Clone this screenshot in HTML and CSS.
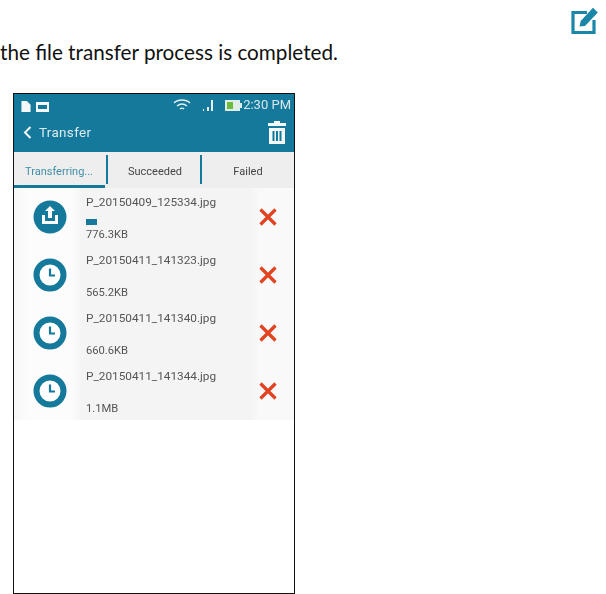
FILE: index.html
```html
<!DOCTYPE html>
<html lang="en">
<head>
<meta charset="UTF-8">
<meta name="viewport" content="width=device-width, initial-scale=1.0">
<title>Transfer</title>
<link rel="stylesheet" href="styles.css">
</head>
<body>
<div class="note-icon">
  <svg width="28" height="28" viewBox="0 0 28 28" fill="none">
    <path d="M16 5.500H2v20h21V13" stroke="#1a87a8" stroke-width="3.2"/>
    <path d="M8.500 19.500l1.200-5.500L22 .8l4.800 4.800L14 19z" fill="#1a87a8"/>
  </svg>
</div>
<p class="note">the file transfer process is completed.</p>

<div class="phone">
  <div class="statusbar">
    <div class="status-left">
      <svg width="10" height="11" viewBox="0 0 10 12"><path d="M0 0h6l4 4v8H0z" fill="#f4f8f9"/></svg>
      <svg width="13" height="10" viewBox="0 0 13 10"><path d="M0 0h13v10H0z" fill="#f4f8f9"/><path d="M2 3h9v4H2z" fill="#14799a"/></svg>
    </div>
    <div class="status-right">
      <svg width="18" height="13" viewBox="0 0 18 13" fill="none" stroke="#e4f0f3" stroke-width="1.4"><path d="M1 4c4-4 12-4 16 0M4 7c3-2.500 7-2.500 10 0M7 10c1-1 3-1 4 0"/></svg>
      <svg class="signal" width="14" height="12" viewBox="0 0 14 12"><path d="M1 10h1v2H1zM5 8h2v4H5zM9 1h2v11H9z" fill="#e4f0f3"/></svg>
      <svg class="battery" width="17" height="11" viewBox="0 0 17 11"><path d="M0 0h15v11H0z" fill="#dfeee8"/><path d="M2 2h6v7H2z" fill="#6cbb3c"/><path d="M15 3h2v5h-2z" fill="#dfeee8"/></svg>
      <span class="clock">2:30 PM</span>
    </div>
  </div>
  <div class="appbar">
    <div class="back">
      <svg width="9" height="13" viewBox="0 0 9 13" fill="none" stroke="#f2f7f8" stroke-width="2"><path d="M7.500 1L2 6.500l5.500 5.500"/></svg>
      <span class="title">Transfer</span>
    </div>
    <svg class="trash" width="18" height="23" viewBox="0 0 18 23">
      <path d="M6 0h6v2h6v3H0V2h6z" fill="#f4f8f9"/>
      <path d="M1 7h16v16H1z" fill="#f4f8f9"/>
      <path d="M4.500 10h2v10h-2zM8 10h2v10H8zM11.500 10h2v10h-2z" fill="#14799a"/>
    </svg>
  </div>
  <div class="tabs">
    <div class="tab active">Transferring...</div>
    <div class="tab">Succeeded</div>
    <div class="tab">Failed</div>
  </div>
  <div class="list">
    <div class="row">
      <div class="badge">
        <svg width="34" height="34" viewBox="0 0 34 34">
          <circle cx="17" cy="17" r="16.500" fill="#14799a"/>
          <path d="M17 6l5 5h-3v7h-4v-7h-3z" fill="#fff"/>
          <path d="M9 15h3v6h10v-6h3v9H9z" fill="#fff"/>
        </svg>
      </div>
      <div class="info">
        <div class="name">P_20150409_125334.jpg</div>
        <div class="progress"></div>
        <div class="size">776.3KB</div>
      </div>
      <div class="remove">
        <svg width="18" height="18" viewBox="0 0 18 18" stroke="#e2421f" stroke-width="3.200"><path d="M1.500 1.500l15 15M16.500 1.500l-15 15"/></svg>
      </div>
    </div>
    <div class="row">
      <div class="badge">
        <svg width="34" height="34" viewBox="0 0 34 34">
          <circle cx="17" cy="17" r="13.500" fill="#fff" stroke="#14799a" stroke-width="6"/>
          <path d="M17 10.500v7h5" fill="none" stroke="#14799a" stroke-width="2.200"/>
        </svg>
      </div>
      <div class="info">
        <div class="name">P_20150411_141323.jpg</div>
        <div class="size">565.2KB</div>
      </div>
      <div class="remove">
        <svg width="18" height="18" viewBox="0 0 18 18" stroke="#e2421f" stroke-width="3.200"><path d="M1.500 1.500l15 15M16.500 1.500l-15 15"/></svg>
      </div>
    </div>
    <div class="row">
      <div class="badge">
        <svg width="34" height="34" viewBox="0 0 34 34">
          <circle cx="17" cy="17" r="13.500" fill="#fff" stroke="#14799a" stroke-width="6"/>
          <path d="M17 10.500v7h5" fill="none" stroke="#14799a" stroke-width="2.200"/>
        </svg>
      </div>
      <div class="info">
        <div class="name">P_20150411_141340.jpg</div>
        <div class="size">660.6KB</div>
      </div>
      <div class="remove">
        <svg width="18" height="18" viewBox="0 0 18 18" stroke="#e2421f" stroke-width="3.200"><path d="M1.500 1.500l15 15M16.500 1.500l-15 15"/></svg>
      </div>
    </div>
    <div class="row">
      <div class="badge">
        <svg width="34" height="34" viewBox="0 0 34 34">
          <circle cx="17" cy="17" r="13.500" fill="#fff" stroke="#14799a" stroke-width="6"/>
          <path d="M17 10.500v7h5" fill="none" stroke="#14799a" stroke-width="2.200"/>
        </svg>
      </div>
      <div class="info">
        <div class="name">P_20150411_141344.jpg</div>
        <div class="size">1.1MB</div>
      </div>
      <div class="remove">
        <svg width="18" height="18" viewBox="0 0 18 18" stroke="#e2421f" stroke-width="3.200"><path d="M1.500 1.500l15 15M16.500 1.500l-15 15"/></svg>
      </div>
    </div>
  </div>
</div>
</body>
</html>
```

FILE: styles.css
```css
html, body {
  margin: 0;
  height: 594px;
  overflow: hidden;
  background: #fff;
}
body {
  font-family: "Roboto", sans-serif;
}
.note-icon {
  display: flex;
  justify-content: flex-end;
  padding: 7px 7px 0 0;
  height: 30px;
}
.note {
  margin: 0;
  height: 30px;
  font-family: "Lato", sans-serif;
  font-size: 20.7px;
  line-height: 30px;
  color: #111;
}
.phone {
  margin: 26px 0 0 13px;
  width: 282px;
  height: 501px;
  box-sizing: border-box;
  border: 1px solid #111;
  background: #fff;
}
.statusbar {
  height: 18px;
  background: #14799a;
  display: flex;
  justify-content: space-between;
  align-items: flex-end;
  padding: 0 3px 0 7px;
}
.status-left, .status-right {
  display: flex;
  align-items: center;
  gap: 5px;
}
.clock {
  font-size: 13px;
  line-height: 14px;
  color: #d7e8ed;
  filter: blur(0.4px);
}
.signal {
  margin-left: 6px;
}
.battery {
  margin-left: 4px;
  margin-right: -4px;
}
.appbar {
  height: 40px;
  background: #14799a;
  display: flex;
  justify-content: space-between;
  align-items: center;
  padding: 0 8px 0 9px;
}
.back {
  display: flex;
  align-items: center;
  gap: 7px;
}
.title {
  font-size: 13.5px;
  letter-spacing: 0.3px;
  color: #dbeaee;
  filter: blur(0.4px);
}
.tabs {
  height: 36px;
  display: grid;
  grid-template-columns: 94px 94px 1fr;
  background: #eeeeee;
}
.tab {
  display: flex;
  align-items: center;
  justify-content: center;
  font-size: 11px;
  color: #444;
  padding-top: 3px;
  position: relative;
  filter: blur(0.35px);
}
.tab:not(:last-child)::before {
  content: "";
  position: absolute;
  right: 0;
  top: 3px;
  bottom: 4px;
  width: 2px;
  background: #14799a;
}
.tab.active {
  color: #3f8ea6;
  padding-right: 4px;
}
.tab.active::after {
  content: "";
  position: absolute;
  left: 0;
  right: 3px;
  bottom: 0;
  height: 3px;
  background: #14799a;
}
.row {
  height: 58px;
  display: flex;
  align-items: center;
  background: linear-gradient(90deg, #f7f7f7 0, #fcfcfc 14px, #fcfcfc 58px, #f4f4f4 68px, #f4f4f4 236px, #f9f9f9 246px);
}
.badge {
  width: 72px;
  display: flex;
  justify-content: center;
  flex-shrink: 0;
}
.badge svg {
  display: block;
}
.info {
  width: 173px;
  height: 50px;
  box-sizing: border-box;
  padding-top: 3px;
  display: flex;
  flex-direction: column;
  position: relative;
  color: #555;
  filter: blur(0.35px);
}
.name {
  font-size: 11.8px;
  line-height: 14px;
}
.size {
  margin-top: auto;
  font-size: 11.2px;
  line-height: 14px;
}
.progress {
  position: absolute;
  left: 0;
  top: 27px;
  width: 11px;
  height: 6px;
  background: #14799a;
}
.remove {
  display: flex;
}
```
